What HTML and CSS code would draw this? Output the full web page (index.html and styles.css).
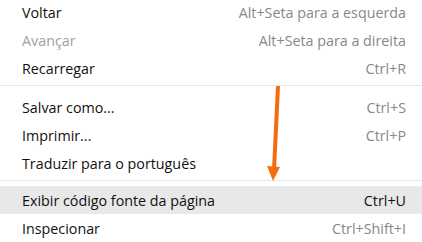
FILE: index.html
```html
<!DOCTYPE html>
<html lang="pt-BR">
<head>
<meta charset="utf-8">
<title>Menu</title>
<link rel="stylesheet" href="styles.css">
</head>
<body>
<div class="menu">
  <div class="item"><span class="label">Voltar</span><span class="key">Alt+Seta para a esquerda</span></div>
  <div class="item disabled"><span class="label">Avançar</span><span class="key">Alt+Seta para a direita</span></div>
  <div class="item"><span class="label">Recarregar</span><span class="key">Ctrl+R</span></div>
  <div class="sep sep-wide"></div>
  <div class="item"><span class="label">Salvar como...</span><span class="key">Ctrl+S</span></div>
  <div class="item"><span class="label">Imprimir...</span><span class="key">Ctrl+P</span></div>
  <div class="item"><span class="label">Traduzir para o português</span><span class="key"></span></div>
  <div class="sep"></div>
  <div class="item active"><span class="label">Exibir código fonte da página</span><span class="key">Ctrl+U</span></div>
  <div class="item"><span class="label">Inspecionar</span><span class="key">Ctrl+Shift+I</span></div>
</div>
<svg class="arrow" width="30" height="110" viewBox="0 0 30 110" aria-hidden="true">
  <path d="M20 2 L16 86" stroke="#f36d10" stroke-width="4" fill="none" stroke-linecap="butt"/>
  <polygon points="9,82 22,83 15,97" fill="#f36d10"/>
</svg>
</body>
</html>
```
FILE: styles.css
```css
html, body {
  margin: 0;
  padding: 0;
  background: #ffffff;
}
body {
  width: 422px;
  height: 242px;
  overflow: hidden;
  position: relative;
  font-family: "Open Sans", "Noto Sans", "Liberation Sans", sans-serif;
  font-size: 14.3px;
}
.menu {
  display: flex;
  flex-direction: column;
  margin-top: -2px;
}
.item {
  display: flex;
  align-items: center;
  justify-content: space-between;
  height: 28px;
  padding: 0 16px 0 22px;
  color: #111111;
}
.item.disabled .label {
  color: #a0a0a0;
}
.key {
  color: #888888;
}
.item.active {
  background: #e8e8e8;
}
.item.active .key {
  color: #111111;
}
.sep {
  height: 1px;
  background: #e6e6e6;
  margin: 3px 0 5px;
}
.sep.sep-wide {
  margin-bottom: 7px;
}
.arrow {
  position: absolute;
  left: 258px;
  top: 84px;
}
```
